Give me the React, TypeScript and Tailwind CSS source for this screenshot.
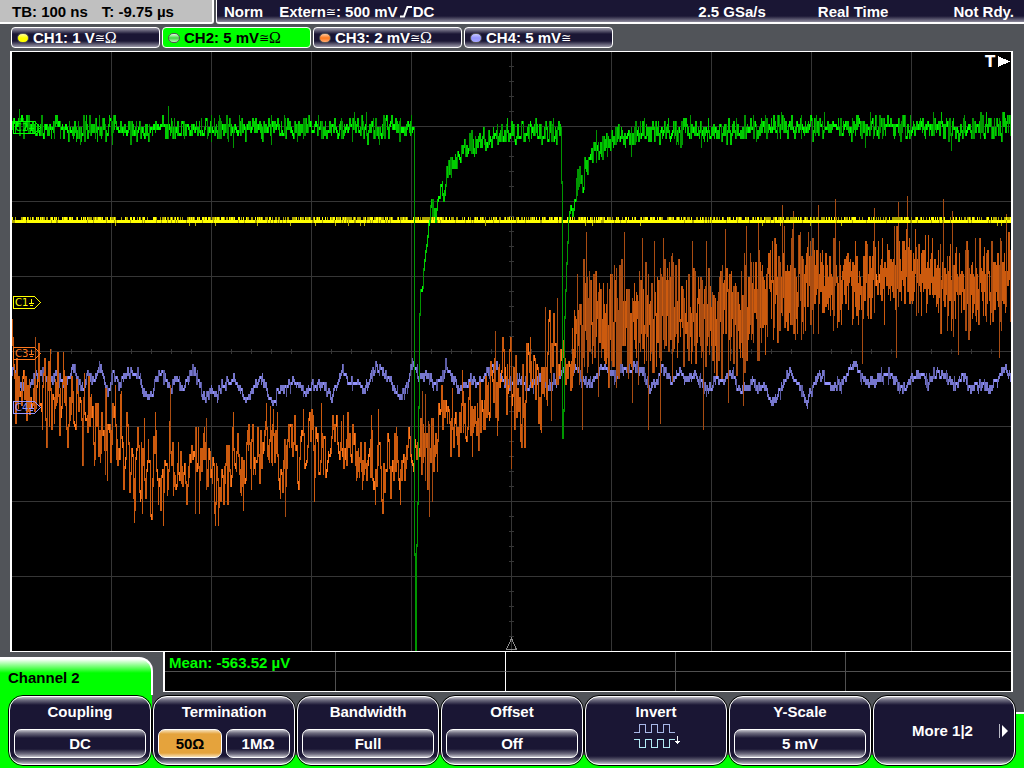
import type { ReactNode } from "react";

type Point = [number, number];

interface Shade {
  color: string;
  d: string;
}

const LEFT = 12;
const RIGHT = 1011;
const STEP = 3; // ADC step in screen units

const NAVY_KEY =
  "bg-[linear-gradient(to_bottom,#c4c3cc_0px,#6f6d80_3px,#1a1634_8px,#1a1634_calc(100%-8px),#6f6d80_calc(100%-3px),#c4c3cc_100%)]";

function makeRandom(seed: number) {
  let s = seed;
  return () => {
    s = (s * 1664525 + 1013904223) % 4294967296;
    return s / 4294967296;
  };
}

function interpolate(points: Point[], x: number) {
  if (x <= points[0][0]) return points[0][1];
  for (let i = 1; i < points.length; i++) {
    const [x1, y1] = points[i];
    if (x <= x1) {
      const [x0, y0] = points[i - 1];
      return y0 + ((y1 - y0) * (x - x0)) / (x1 - x0);
    }
  }
  return points[points.length - 1][1];
}

// One vertical stroke per column over all of its samples and the first of the
// next column; the longer the stroke the darker it is drawn
function toShades(columns: number[][], colors: string[], limits: number[]): Shade[] {
  const paths = colors.map(() => "");
  for (let i = 0; i < columns.length - 1; i++) {
    const ys = [...columns[i], columns[i + 1][0]].map((y) => Math.round((y - 1) / STEP) * STEP + 1);
    const top = Math.min(...ys);
    const height = Math.min(Math.max(...ys) - top + STEP, 651 - top);
    let shade = limits.findIndex((limit) => height <= limit);
    if (shade < 0) shade = colors.length - 1;
    paths[shade] += `M${LEFT + i} ${top}h1v${height}h-1z`;
  }
  return colors.map((color, i) => ({ color, d: paths[i] }));
}

const CH2_SHAPE: Point[] = [
  [12, 127], [414, 127], [415, 553], [416, 651], [417, 545], [418, 502], [419, 406],
  [420, 313], [421, 290], [423, 286], [424, 268], [426, 250], [428, 235], [430, 212], [432, 198],
  [435, 209], [438, 205], [441, 185], [445, 188], [448, 170], [455, 162], [460, 152], [466, 146],
  [475, 141], [490, 135], [510, 131], [561, 129], [562, 180], [563, 437], [564, 408], [565, 315],
  [567, 262], [568, 240], [569, 218], [571, 205], [573, 213], [576, 194], [578, 179], [583, 176],
  [588, 165], [595, 148], [605, 142], [615, 135], [640, 131], [720, 130], [760, 126], [1011, 126],
];

const CH2_PEAKS: Point[] = [
  [19, 109], [80, 141], [99, 115], [112, 143], [168, 106], [211, 115], [233, 144], [271, 143],
  [239, 115], [318, 115], [354, 112], [366, 112], [379, 141], [553, 117], [596, 130], [631, 153],
  [668, 118], [690, 115], [701, 146], [791, 115], [801, 116], [865, 144], [870, 112], [951, 147],
  [986, 112], [1004, 112],
];

const CH4_SHAPE: Point[] = [
  [12, 368], [16, 375], [20, 385], [27, 393], [35, 378], [42, 374], [50, 380], [57, 374], [65, 386],
  [73, 366], [78, 382], [84, 388], [88, 374], [94, 378], [101, 366], [108, 395], [114, 372],
  [119, 387], [124, 376], [130, 372], [139, 372], [143, 390], [150, 398], [158, 375], [165, 376],
  [170, 388], [178, 378], [183, 390], [193, 367], [205, 399], [213, 390], [217, 396], [224, 382],
  [235, 378], [247, 402], [256, 382], [263, 378], [272, 404], [282, 388], [295, 382], [303, 392],
  [312, 386], [322, 382], [331, 398], [340, 375], [343, 368], [349, 385], [358, 380], [365, 391],
  [376, 366], [387, 375], [395, 390], [402, 394], [407, 384], [413, 363], [420, 377], [430, 378],
  [437, 387], [446, 366], [458, 388], [470, 381], [480, 384], [487, 372], [497, 365], [505, 384],
  [515, 378], [520, 378], [528, 388], [540, 376], [550, 386], [560, 375], [566, 366], [576, 367],
  [584, 382], [592, 382], [602, 366], [615, 376], [623, 366], [636, 368], [644, 372], [650, 388],
  [658, 380], [663, 365], [671, 382], [680, 374], [687, 380], [694, 373], [702, 385], [708, 391],
  [716, 378], [725, 382], [731, 370], [740, 394], [752, 383], [763, 388], [774, 404], [782, 386],
  [790, 369], [798, 382], [807, 401], [817, 377], [823, 374], [829, 386], [840, 386], [854, 364],
  [862, 378], [870, 383], [880, 376], [889, 374], [902, 388], [912, 380], [922, 375], [928, 383],
  [934, 372], [943, 374], [950, 382], [957, 382], [965, 376], [970, 388], [980, 384], [990, 389],
  [998, 378], [1004, 366], [1011, 376],
];

const CH3_TOP: Point[] = [
  [12, 320], [16, 350], [40, 345], [72, 362], [100, 385], [120, 395], [135, 425], [170, 430],
  [215, 432], [240, 430], [270, 412], [300, 420], [335, 420], [375, 425], [415, 420], [424, 395],
  [438, 400], [450, 388], [480, 380], [500, 345], [540, 335], [560, 315], [572, 320], [585, 260],
  [620, 262], [680, 262], [740, 265], [765, 238], [800, 232], [850, 245], [905, 225], [950, 240],
  [1011, 235],
];

const CH3_BOTTOM: Point[] = [
  [12, 350], [16, 425], [40, 425], [72, 440], [100, 455], [120, 475], [140, 500], [170, 498],
  [215, 500], [240, 490], [270, 470], [310, 482], [340, 478], [375, 490], [415, 480], [430, 478],
  [440, 455], [480, 450], [500, 425], [520, 430], [545, 405], [572, 385], [590, 370], [620, 380],
  [680, 375], [740, 375], [765, 350], [800, 330], [850, 325], [905, 315], [950, 330], [1011, 330],
];

const CH3_PEAKS: Point[] = [
  [12, 320], [35, 338], [50, 350], [42, 428], [68, 446], [94, 462], [105, 471], [115, 386],
  [123, 486], [134, 519], [142, 510], [144, 418], [155, 412], [163, 522], [170, 386], [195, 510],
  [199, 510], [206, 418], [218, 522], [243, 507], [270, 407], [277, 412], [285, 513], [303, 409],
  [314, 498], [321, 403], [343, 415], [362, 486], [371, 415], [375, 501], [378, 410], [400, 501],
  [422, 392], [425, 394], [429, 514], [432, 498], [462, 370], [472, 453], [495, 331], [511, 465],
  [520, 440], [526, 342], [530, 337], [541, 429], [545, 307], [551, 417], [557, 298], [577, 274],
  [586, 232], [582, 426], [598, 395], [624, 232], [632, 399], [642, 238], [654, 241], [660, 422],
  [663, 238], [648, 426], [692, 240], [703, 427], [706, 241], [725, 229], [728, 400], [743, 402],
  [746, 226], [758, 222], [782, 205], [793, 211], [818, 205], [835, 199], [862, 360], [874, 208],
  [896, 355], [898, 202], [907, 196], [943, 199], [952, 211], [958, 352], [999, 354], [1006, 214],
];

function buildCh2() {
  const random = makeRandom(11);
  const peaks = new Map(CH2_PEAKS);
  const columns: number[][] = [];
  for (let x = LEFT; x <= RIGHT; x++) {
    const base = interpolate(CH2_SHAPE, x);
    const falling = (x > 413 && x < 430) || (x > 561 && x < 576);
    if (falling) {
      columns.push([base]);
      continue;
    }
    const samples = [base + (random() + random() - 1) * 14];
    if (random() < 0.6) samples.push(base + (random() + random() - 1) * 14);
    if (peaks.has(x)) samples.push(peaks.get(x)!);
    columns.push(samples);
  }
  return toShades(columns, ["#00ff00", "#00cc00", "#009600"], [6, 15]);
}

function buildCh3() {
  const random = makeRandom(77);
  const peaks = new Map(CH3_PEAKS);
  const columns: number[][] = [];
  let last = 0;
  for (let x = LEFT; x <= RIGHT; x++) {
    const top = interpolate(CH3_TOP, x);
    const bottom = interpolate(CH3_BOTTOM, x);
    const dense = x > 570;
    const samples: number[] = [];
    const count = dense ? 3 : random() < 0.45 ? 2 : 1;
    for (let i = 0; i < count; i++) {
      last = last * (dense ? 0 : 0.45) + (random() + random() - 1) * (dense ? 0.6 : 0.68);
      samples.push((top + bottom) / 2 + last * (bottom - top));
    }
    if (peaks.has(x)) samples.push(peaks.get(x)!);
    columns.push(samples);
  }
  return toShades(columns, ["#ff7a1e", "#cc5a0e", "#a84c12"], [12, 66]);
}

function buildCh4() {
  const random = makeRandom(5);
  const columns: number[][] = [];
  for (let x = LEFT; x <= RIGHT; x++) {
    const base = interpolate(CH4_SHAPE, x) - 1;
    const samples = [base + (random() + random() - 1) * 7];
    if (random() < 0.4) samples.push(base + (random() + random() - 1) * 9);
    columns.push(samples);
  }
  return toShades(columns, ["#9494ff", "#7676cc", "#5c5ca4"], [3, 9]);
}

function buildCh1(): Shade[] {
  const random = makeRandom(31);
  let bright = `M${LEFT} 220h${RIGHT - LEFT}v3h-${RIGHT - LEFT}z`;
  let dim = "";
  let gaps = "";
  for (let x = LEFT; x < RIGHT; x++) {
    const r = random();
    if (r < 0.25) bright += `M${x} 217h1v3h-1z`;
    else if (r < 0.62) dim += `M${x} 217h1v3h-1z`;
    if (random() < 0.12) gaps += `M${x} 220h1v3h-1z`;
    if (random() < 0.02) dim += `M${x} 223h1v3h-1z`;
  }
  return [
    { color: "#ffff00", d: bright },
    { color: "#b0a800", d: gaps + dim },
  ];
}

const TRACES = [buildCh4(), buildCh3(), buildCh1(), buildCh2()];

const MARKERS = [
  { label: "C2", y: 121, color: "#00ff00" },
  { label: "C1", y: 296, color: "#ffff00" },
  { label: "C3", y: 347, color: "#ff7a1e" },
  { label: "C4", y: 401, color: "#9494ff" },
];

const CHANNELS = [
  { name: "CH1", scale: "1 V", ohm: true, active: false, dot: "bg-[linear-gradient(#ffffa0,#ffff00,#ffff00)]" },
  { name: "CH2", scale: "5 mV", ohm: true, active: true, dot: "bg-[linear-gradient(#e0ffe0,#40d840,#c0f0c0)]" },
  { name: "CH3", scale: "2 mV", ohm: true, active: false, dot: "bg-[linear-gradient(#ffc8a0,#ff7a1e,#ffa870)]" },
  { name: "CH4", scale: "5 mV", ohm: false, active: false, dot: "bg-[linear-gradient(#c8c8ff,#9494ff,#a8a8ff)]" },
];

function gridPath() {
  let d = "";
  for (let x = 111; x < RIGHT; x += 100) d += `M${x} 52h1v599h-1z`;
  for (let y = 126; y < 651; y += 75) d += `M12 ${y}h999v1h-999z`;
  for (let x = 31; x < RIGHT; x += 20) d += `M${x} 349h1v5h-1z`;
  for (let y = 66; y < 651; y += 15) d += `M509 ${y}h5v1h-5z`;
  return d;
}

function Coupled() {
  return <span className="font-['DejaVu_Sans',sans-serif] text-[12px] font-normal">≅</span>;
}

function Graticule() {
  return (
    <svg viewBox="12 52 999 599" className="block w-full" shapeRendering="crispEdges">
      <path d={gridPath()} fill="#363636" />
      {TRACES.map((shades, i) => (
        <g key={i}>
          {shades.map((s) => (
            <path key={s.color} d={s.d} fill={s.color} />
          ))}
        </g>
      ))}
      {MARKERS.map((m) => (
        <g key={m.label} stroke={m.color} fill="none">
          <path d={`M13.5 ${m.y + 0.5}h21l6 6l-6 6h-21z`} />
          <path d={`M31.5 ${m.y + 3}v5M29 ${m.y + 7.5}h5M30 ${m.y + 9.5}h3`} />
          <text
            x="15"
            y={m.y + 10}
            fill={m.color}
            stroke="none"
            className="font-['DejaVu_Sans',sans-serif] text-[10px] font-normal"
          >
            {m.label}
          </text>
        </g>
      ))}
      <path d="M511.5 638.5L506.5 649.5H516.5Z" fill="none" stroke="#8c8c8c" />
      <text x="985" y="67" fill="#fff" className="font-['DejaVu_Sans',sans-serif] text-[15px] font-bold">
        T
      </text>
      <path d="M998 56L1010 61.5L998 67Z" fill="#fff" />
    </svg>
  );
}

function SoftKey({ title, children }: { title: string; children: ReactNode }) {
  return (
    <div className="h-[71px] rounded-[15px] border border-black">
      <section
        className={`flex h-full flex-col justify-between rounded-[14px] border border-white px-1 pt-[6px] pb-[6px] ${NAVY_KEY}`}
      >
        <h2>{title}</h2>
        <div className="flex gap-1">{children}</div>
      </section>
    </div>
  );
}

function ValueButton({ label, selected = false }: { label: string; selected?: boolean }) {
  return (
    <button
      type="button"
      aria-pressed={selected}
      className={`h-[29px] flex-1 rounded-[7px] border border-white ${
        selected
          ? "bg-[linear-gradient(to_bottom,#f6e0b8_0px,#e5a33c_4px,#e5a33c_calc(100%-4px),#f6e0b8_100%)] text-black"
          : `${NAVY_KEY} text-white`
      }`}
    >
      {label}
    </button>
  );
}

function InvertIcon() {
  return (
    <svg width="48" height="26" viewBox="0 0 48 26" fill="none" shapeRendering="crispEdges" aria-hidden="true">
      <path d="M0 9.5h5.5v-8h6v8h6v-8h6v8h6v-8h6v8h5" stroke="#a9b8e8" />
      <path d="M0 16.5h5.5v8h6v-8h6v8h6v-8h6v8h6v-8h5" stroke="#b4ecf6" />
      <path d="M43.5 13v8" stroke="#fff" />
      <path d="M41 18h5v1h-1v1h-1v1h-1v-1h-1v-1h-1z" fill="#fff" />
    </svg>
  );
}

export default function App() {
  return (
    <div className="flex min-h-screen flex-col bg-[#515459] font-['Liberation_Sans',Arial,sans-serif] text-[15px] leading-[18px] font-bold text-white">
      <header className="flex h-6 gap-[2px] whitespace-nowrap">
        <div className="flex w-[214px] items-center gap-[14px] rounded-br-[3px] border-r-2 border-b-2 border-white bg-[#c0c0c0] pt-[2px] pl-3 text-black">
          <span>TB: 100 ns</span>
          <span>T: -9.75 µs</span>
        </div>
        <div className="flex flex-1 items-center rounded-bl-[3px] border-b-2 border-l border-white bg-[linear-gradient(to_bottom,#1a1634_16px,#8d8b9c_22px)] pt-[2px] pr-[10px] pl-[7px]">
          <span className="mr-4">Norm</span>
          <span className="flex items-center">
            Extern
            <Coupled />: 500 mV
            <svg width="14" height="14" viewBox="0 0 14 14" fill="none" className="ml-px" aria-label="rising edge">
              <path d="M1 11.5h4L8.5 2H13" stroke="#fff" strokeWidth="2" />
            </svg>
            DC
          </span>
          <span className="mr-[52px] ml-auto">2.5 GSa/s</span>
          <span className="mr-[65px]">Real Time</span>
          <span>Not Rdy.</span>
        </div>
      </header>

      <nav className="my-[3px] ml-[11px] flex gap-[2px]">
        {CHANNELS.map((c) => (
          <button
            key={c.name}
            type="button"
            className={`flex h-[21px] w-[149px] items-center rounded-[4px] border border-white pl-[5px] whitespace-nowrap ${
              c.active
                ? "bg-[#00ff00] text-black"
                : "bg-[linear-gradient(to_bottom,#9a98a8_0px,#1a1634_6px,#1a1634_13px,#9a98a8_19px)] text-white"
            }`}
          >
            <span className={`mr-1 h-[10px] w-3 rounded-full border border-[#555] ${c.dot}`} />
            {c.name}: {c.scale}
            <Coupled />
            {c.ohm && <span className="font-['Liberation_Serif',serif] text-[16px] font-normal">Ω</span>}
          </button>
        ))}
      </nav>

      <main className="mr-[11px] ml-[10px] border-x-2 border-y border-white bg-black">
        <Graticule />
      </main>

      <div className="flex h-[43px] items-start justify-between pr-[11px]">
        <div className="mt-[5px] h-[38px] w-[153px] rounded-tr-[14px] border-t-2 border-r-2 border-white bg-[linear-gradient(to_bottom,#ffffff_0px,#00ff00_14px)] pt-[10px] pl-2 text-black">
          Channel 2
        </div>
        <div className="ml-[10px] grid h-10 flex-1 grid-cols-[171px_170px_170px_170px_1fr] grid-rows-[20px_1fr] border-r-2 border-b border-l-2 border-white bg-black">
          <output className="border-r border-b border-[#505050] pt-[2px] pl-1 whitespace-nowrap text-[#00ff00]">
            Mean: -563.52 µV
          </output>
          <div className="border-r border-b border-r-white border-b-[#505050]" />
          <div className="border-r border-b border-[#505050]" />
          <div className="border-r border-b border-[#505050]" />
          <div className="border-b border-[#505050]" />
          <div className="border-r border-[#505050]" />
          <div className="border-r border-white" />
          <div className="border-r border-[#505050]" />
          <div className="border-r border-[#505050]" />
        </div>
      </div>

      <footer className="flex flex-1">
        <div className="w-2 bg-[#00ff00]" />
        <div className="grid flex-1 grid-cols-7 bg-[linear-gradient(to_bottom,#515459_60px,#00ff00_60px)] pb-[2px] text-center whitespace-nowrap">
          <div className="bg-[#00ff00]">
            <SoftKey title="Coupling">
              <ValueButton label="DC" />
            </SoftKey>
          </div>
          <SoftKey title="Termination">
            <ValueButton label="50Ω" selected />
            <ValueButton label="1MΩ" />
          </SoftKey>
          <SoftKey title="Bandwidth">
            <ValueButton label="Full" />
          </SoftKey>
          <SoftKey title="Offset">
            <ValueButton label="Off" />
          </SoftKey>
          <div className="h-[71px] rounded-[15px] border border-black">
            <button
              type="button"
              className={`flex h-full w-full flex-col items-center rounded-[14px] border border-white pt-[6px] ${NAVY_KEY}`}
            >
              Invert
              <span className="mt-[2px] ml-[3px]">
                <InvertIcon />
              </span>
            </button>
          </div>
          <SoftKey title="Y-Scale">
            <ValueButton label="5 mV" />
          </SoftKey>
          <div className="h-[71px] rounded-[15px] border border-black">
            <button
              type="button"
              className={`flex h-full w-full items-center rounded-[14px] border border-white pr-[5px] ${NAVY_KEY}`}
            >
              <span className="flex-1 pl-3">More 1|2</span>
              <svg width="10" height="16" viewBox="0 0 10 16" aria-hidden="true">
                <path d="M0 1h1v14h-1z" fill="#b9b9c6" />
                <path d="M3 2L9 8L3 14Z" fill="#fff" />
              </svg>
            </button>
          </div>
        </div>
        <div className="flex w-2 flex-col pt-[17px]">
          <div className="flex-1 border-t-2 border-white bg-[#00ff00]" />
        </div>
      </footer>
    </div>
  );
}
